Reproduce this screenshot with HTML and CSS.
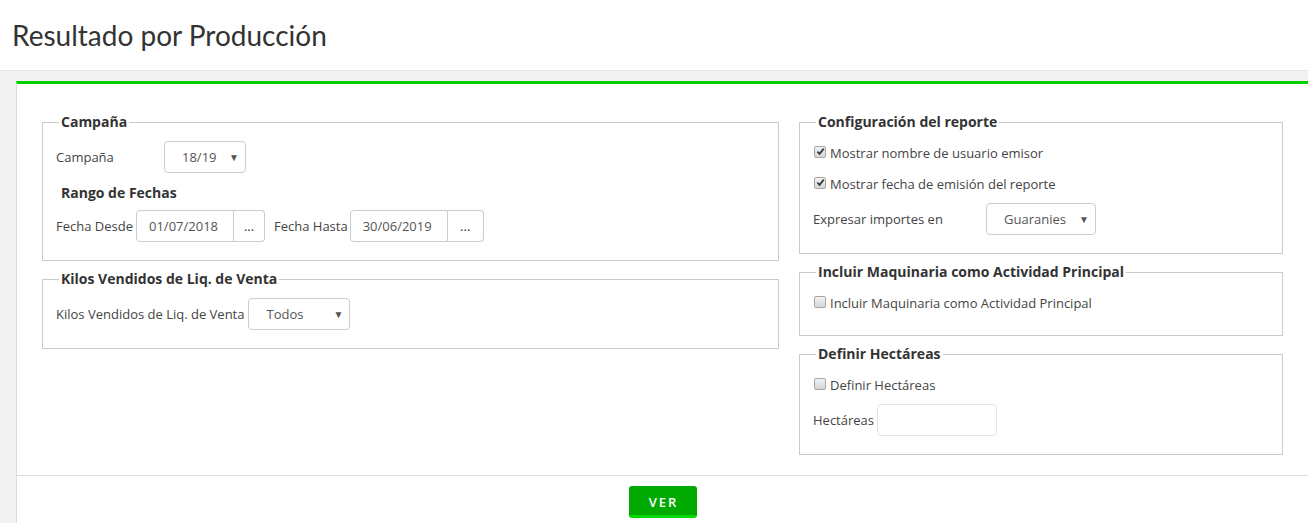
FILE: index.html
```html
<!DOCTYPE html>
<html lang="es">
<head>
    <meta charset="UTF-8">
    <title>Resultado por Producción</title>
    <link rel="stylesheet" href="styles.css">
</head>
<body>
<div class="header">
    <h1>Resultado por Producción</h1>
</div>
<div class="page">
    <div class="panel">
        <div class="form">
            <div class="col">
                <fieldset>
                    <legend>Campaña</legend>
                    <div class="row">
                        <label class="lbl lbl-campana">Campaña</label>
                        <div class="select sel-campana"><span>18/19</span><span class="caret">&#9660;</span></div>
                    </div>
                    <div class="subtitle">Rango de Fechas</div>
                    <div class="row row-dates">
                        <label class="lbl">Fecha Desde</label>
                        <div class="group">
                            <div class="input date">01/07/2018</div>
                            <div class="btn-dots">...</div>
                        </div>
                        <label class="lbl lbl-hasta">Fecha Hasta</label>
                        <div class="group">
                            <div class="input date">30/06/2019</div>
                            <div class="btn-dots wide">...</div>
                        </div>
                    </div>
                </fieldset>
                <fieldset>
                    <legend>Kilos Vendidos de Liq. de Venta</legend>
                    <div class="row">
                        <label class="lbl lbl-kilos">Kilos Vendidos de Liq. de Venta</label>
                        <div class="select sel-todos"><span>Todos</span><span class="caret">&#9660;</span></div>
                    </div>
                </fieldset>
            </div>
            <div class="col">
                <fieldset>
                    <legend>Configuración del reporte</legend>
                    <div class="check-row"><span class="check on"><svg viewBox="0 0 10 10" width="9" height="9"><path d="M1.5 5.2 L4 7.6 L8.6 1.8" fill="none" stroke="#3a3a3a" stroke-width="2"/></svg></span>Mostrar nombre de usuario emisor</div>
                    <div class="check-row"><span class="check on"><svg viewBox="0 0 10 10" width="9" height="9"><path d="M1.5 5.2 L4 7.6 L8.6 1.8" fill="none" stroke="#3a3a3a" stroke-width="2"/></svg></span>Mostrar fecha de emisión del reporte</div>
                    <div class="row">
                        <label class="lbl lbl-importes">Expresar importes en</label>
                        <div class="select sel-moneda"><span>Guaranies</span><span class="caret">&#9660;</span></div>
                    </div>
                </fieldset>
                <fieldset class="only-check">
                    <legend>Incluir Maquinaria como Actividad Principal</legend>
                    <div class="check-row"><span class="check"></span>Incluir Maquinaria como Actividad Principal</div>
                </fieldset>
                <fieldset>
                    <legend>Definir Hectáreas</legend>
                    <div class="check-row"><span class="check"></span>Definir Hectáreas</div>
                    <div class="row">
                        <label class="lbl lbl-ha">Hectáreas</label>
                        <div class="input hect"></div>
                    </div>
                </fieldset>
            </div>
        </div>
        <div class="footer">
            <button class="btn-ver">VER</button>
        </div>
    </div>
</div>
</body>
</html>
```

FILE: styles.css
```css
body {
    margin: 0;
    font-family: "Open Sans", "Liberation Sans", sans-serif;
    font-size: 13px;
    color: #444;
    background-color: #f2f2f2;
}

div.header {
    height: 70px;
    background-color: #fff;
    border-bottom: 1px solid #e6e6e6;
    display: flex;
    align-items: center;
}

div.header h1 {
    margin: 0 0 0 12px;
    font-family: Lato, "Open Sans", sans-serif;
    font-weight: 400;
    font-size: 28px;
    color: #333;
}

div.page {
    padding: 10px 0 0 16px;
}

div.panel {
    background-color: #fff;
    border-top: 3px solid #00d000;
    border-left: 1px solid #dcdcdc;
    min-height: 450px;
}

div.form {
    display: grid;
    grid-template-columns: 737px 484px;
    column-gap: 20px;
    padding: 28px 25px 0;
}

fieldset {
    margin: 0 0 8px;
    padding: 0 13px 18px;
    border: 1px solid #cbcbcb;
}

fieldset.only-check {
    padding-bottom: 22px;
}

legend {
    margin-left: 3px;
    padding: 0 2px;
    font-weight: 700;
    font-size: 14px;
    line-height: 20px;
    color: #333;
}

div.row {
    display: flex;
    align-items: center;
    margin-top: 9px;
}

div.row.row-dates {
    margin-top: 7px;
}

label.lbl {
    white-space: nowrap;
    margin-right: 3px;
}

label.lbl-campana {
    width: 108px;
    margin-right: 0;
}

label.lbl-hasta {
    margin-left: 9px;
    margin-right: 2px;
}

label.lbl-kilos {
    margin-right: 4px;
}

label.lbl-importes {
    width: 173px;
    margin-right: 0;
}

div.subtitle {
    margin: 10px 0 0 5px;
    font-weight: 700;
    font-size: 14px;
    line-height: 20px;
    color: #333;
}

div.select {
    height: 32px;
    box-sizing: border-box;
    border: 1px solid #ccc;
    border-radius: 4px;
    display: flex;
    align-items: center;
    justify-content: space-between;
    padding: 0 6px 0 17px;
    color: #555;
}

div.select .caret {
    font-size: 10px;
    color: #555;
}

div.sel-campana {
    width: 82px;
}

div.sel-todos {
    width: 102px;
}

div.sel-moneda {
    width: 110px;
}

div.group {
    display: flex;
    height: 32px;
}

div.input {
    height: 32px;
    box-sizing: border-box;
    border: 1px solid #ccc;
    border-radius: 4px;
    color: #555;
    display: flex;
    align-items: center;
}

div.input.date {
    width: 98px;
    padding-left: 12px;
    border-radius: 4px 0 0 4px;
}

div.btn-dots {
    width: 31px;
    box-sizing: border-box;
    border: 1px solid #ccc;
    border-left: none;
    border-radius: 0 4px 4px 0;
    display: flex;
    align-items: center;
    justify-content: center;
    color: #333;
}

div.btn-dots.wide {
    width: 36px;
}

div.input.hect {
    width: 120px;
    border-color: #e3e3e3;
}

div.check-row {
    display: flex;
    align-items: center;
    height: 21px;
    margin-top: 10px;
    color: #444;
}

span.check {
    width: 12px;
    height: 12px;
    box-sizing: border-box;
    border: 1px solid #a6a6a6;
    border-radius: 2px;
    background: linear-gradient(#f2f2f2, #d6d6d6);
    margin: 0 4px 0 1px;
    display: flex;
    align-items: center;
    justify-content: center;
    position: relative;
    top: -1px;
}

div.footer {
    margin-top: 12px;
    border-top: 1px solid #dedede;
    padding-top: 10px;
    display: flex;
    justify-content: center;
}

button.btn-ver {
    width: 68px;
    height: 32px;
    border: none;
    border-bottom: 3px solid #00d800;
    border-radius: 3px;
    background-color: #00aa00;
    color: #fff;
    font-family: "Open Sans", sans-serif;
    font-weight: 600;
    font-size: 13px;
    letter-spacing: 2px;
    padding: 2px 0 0 2px;
}
```
